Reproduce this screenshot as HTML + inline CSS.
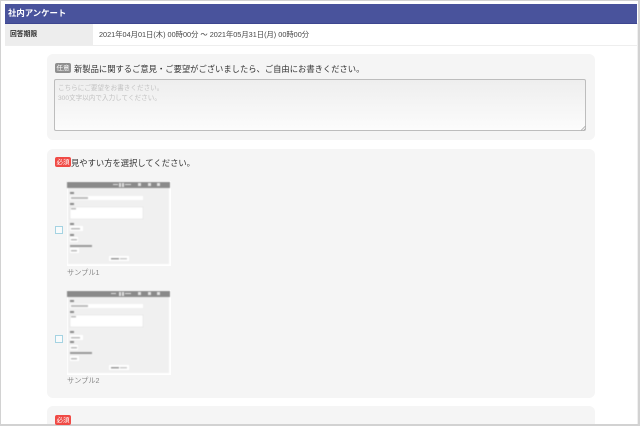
<!DOCTYPE html>
<html lang="ja">
<head>
<meta charset="utf-8">
<style>
html,body{margin:0;padding:0;width:640px;height:426px;overflow:hidden;background:#fff;font-family:"Liberation Sans","Noto Sans CJK JP",sans-serif}
.a{position:absolute}
#w{position:absolute;left:0;top:0;width:640px;height:426px;filter:blur(.3px)}
.frame{left:0;top:0;width:640px;height:426px;box-sizing:border-box;border:solid #d2d2d2;border-width:1px 2px 2px 1px;background:#fff}
.rl{left:637px;top:23px;width:1px;height:401px;background:#f0f0f0}
.head{left:5px;top:4px;width:632px;height:19px;background:#49539c;border-bottom:1px solid #3d4690;color:#fff;font-size:8.4px;font-weight:bold;line-height:19px;text-indent:3px;white-space:nowrap}
.lab{left:5px;top:24px;width:88px;height:21px;background:#ededed;color:#333;font-size:6.8px;font-weight:bold;line-height:21px;text-indent:5px}
.per{left:99px;top:24px;height:21px;line-height:21px;font-size:7.3px;color:#444;white-space:nowrap}
.sep{left:5px;top:45px;width:632px;height:1px;background:#eeeeee}
.card{left:47px;width:548px;background:#f5f5f5;border-radius:6px}
.tag{border-radius:2px;color:#fff;font-size:6.5px;line-height:11px;height:10px;overflow:hidden;text-align:center}
.q{font-size:8.3px;color:#333;white-space:nowrap;line-height:12px}
.ta{left:54px;top:79px;width:532px;height:52px;box-sizing:border-box;border:1px solid #bdbdbd;border-radius:2px;background:linear-gradient(#eeeeee,#fcfcfc);color:#c2c2c2;font-size:6.6px;line-height:10px;padding:4px 3px}
.cb{left:55px;width:6px;height:6px;border:1px solid #a5d3e2;background:#f8fbfc}
.thumb{left:67px;width:104px;height:85px;background:#fff}
.thumb svg{filter:blur(.4px)}
.cap{left:67px;font-size:7.2px;color:#888;white-space:nowrap;line-height:10px}
</style>
</head>
<body>
<div id="w">
<div class="a frame"></div>
<div class="a rl"></div>
<div class="a head">社内アンケート</div>
<div class="a lab">回答期限</div>
<div class="a per">2021年04月01日(木) 00時00分 ～ 2021年05月31日(月) 00時00分</div>
<div class="a sep"></div>

<div class="a card" style="top:54px;height:86px"></div>
<div class="a tag" style="left:55px;top:63px;width:16px;background:#8f8f8f">任意</div>
<div class="a q" style="left:74px;top:63px">新製品に関するご意見・ご要望がございましたら、ご自由にお書きください。</div>
<div class="a ta">こちらにご要望をお書きください。<br>300文字以内で入力してください。</div>
<svg class="a" style="left:580px;top:125px" width="6" height="6" viewBox="0 0 6 6"><path d="M1 5.5L5.5 1M3.5 5.5L5.5 3.5" stroke="#a8a8a8" stroke-width=".8" fill="none"/></svg>

<div class="a card" style="top:149px;height:249px"></div>
<div class="a tag" style="left:55px;top:157px;width:16px;background:#f04a45">必須</div>
<div class="a q" style="left:71px;top:157px">見やすい方を選択してください。</div>

<div class="a cb" style="top:226px"></div>
<div class="a thumb" style="top:181px">
  <svg width="104" height="85" viewBox="0 0 104 85" style="display:block">
    <rect x="0" y="1" width="103" height="6" fill="#8a8a8a"/>
    <rect x="1" y="7" width="101" height="76" fill="#f0f0f0"/>
    <g fill="#e4e4e4"><rect x="46" y="3" width="5" height="1"/><rect x="52" y="2" width="2" height="4"/><rect x="55" y="2" width="2" height="4"/><rect x="58" y="3" width="6" height="1"/><rect x="71" y="2" width="3" height="3"/><rect x="81" y="2" width="3" height="3"/><rect x="90" y="2" width="3" height="3"/></g>
    <rect x="3" y="11" width="4" height="2" fill="#8a8a8a"/>
    <rect x="3" y="15" width="73" height="4" fill="#fff"/><rect x="4" y="16" width="17" height="2" fill="#bbb"/>
    <rect x="3" y="22" width="4" height="2" fill="#8a8a8a"/>
    <rect x="3" y="26" width="73" height="12" fill="#fff" stroke="#ddd" stroke-width=".5"/><rect x="4" y="27" width="5" height="1.5" fill="#bbb"/>
    <rect x="3" y="42" width="4" height="2" fill="#8a8a8a"/>
    <rect x="3" y="45" width="13" height="5" fill="#fff"/><rect x="4" y="47" width="9" height="1.5" fill="#bbb"/>
    <rect x="3" y="53" width="4" height="2" fill="#8a8a8a"/>
    <rect x="3" y="56" width="8" height="5" fill="#fff"/><rect x="4" y="58" width="6" height="1.5" fill="#bbb"/>
    <rect x="3" y="64" width="22" height="2" fill="#999"/>
    <rect x="3" y="67" width="9" height="5" fill="#fff"/><rect x="4" y="69" width="6" height="1.5" fill="#bbb"/>
    <rect x="42" y="75" width="20" height="5" fill="#fff"/><rect x="44" y="77" width="8" height="1.5" fill="#999"/><rect x="53" y="77" width="7" height="1.5" fill="#ccc"/>
  </svg>
</div>
<div class="a cap" style="top:268px">サンプル1</div>

<div class="a cb" style="top:335px"></div>
<div class="a thumb" style="top:290px">
  <svg width="104" height="85" viewBox="0 0 104 85" style="display:block">
    <rect x="0" y="1" width="103" height="6" fill="#8a8a8a"/>
    <rect x="1" y="7" width="101" height="76" fill="#f0f0f0"/>
    <g fill="#e4e4e4"><rect x="44" y="3" width="5" height="1"/><rect x="52" y="2" width="2" height="4"/><rect x="55" y="2" width="2" height="4"/><rect x="58" y="3" width="6" height="1"/><rect x="71" y="2" width="3" height="3"/><rect x="81" y="2" width="3" height="3"/><rect x="90" y="2" width="3" height="3"/></g>
    <rect x="3" y="10" width="4" height="2" fill="#8a8a8a"/>
    <rect x="3" y="14" width="73" height="4" fill="#fff"/><rect x="4" y="15" width="17" height="2" fill="#bbb"/>
    <rect x="3" y="21" width="4" height="2" fill="#8a8a8a"/>
    <rect x="3" y="25" width="73" height="12" fill="#fff" stroke="#ddd" stroke-width=".5"/><rect x="4" y="26" width="5" height="1.5" fill="#bbb"/>
    <rect x="3" y="41" width="4" height="2" fill="#8a8a8a"/>
    <rect x="3" y="45" width="13" height="5" fill="#fff"/><rect x="4" y="47" width="9" height="1.5" fill="#bbb"/>
    <rect x="3" y="51" width="4" height="2" fill="#8a8a8a"/>
    <rect x="3" y="55" width="8" height="5" fill="#fff"/><rect x="4" y="57" width="6" height="1.5" fill="#bbb"/>
    <rect x="3" y="62" width="22" height="2" fill="#999"/>
    <rect x="3" y="66" width="9" height="5" fill="#fff"/><rect x="4" y="68" width="6" height="1.5" fill="#bbb"/>
    <rect x="42" y="75" width="20" height="5" fill="#fff"/><rect x="44" y="77" width="8" height="1.5" fill="#999"/><rect x="53" y="77" width="7" height="1.5" fill="#ccc"/>
  </svg>
</div>
<div class="a cap" style="top:376px">サンプル2</div>

<div class="a card" style="top:406px;height:18px;border-radius:6px 6px 0 0"></div>
<div class="a tag" style="left:55px;top:415px;width:16px;background:#f04a45">必須</div>
</div>
</body>
</html>
